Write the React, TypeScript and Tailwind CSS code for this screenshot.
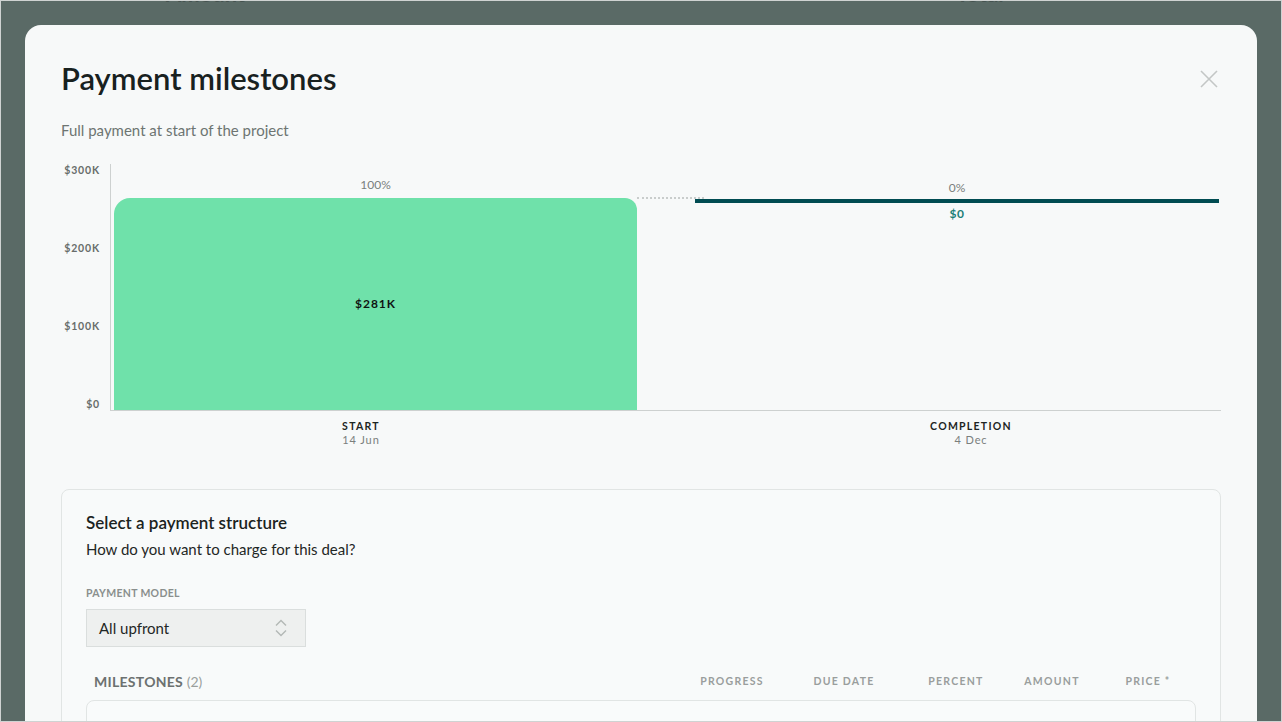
export default function App() {
  return (
    <div
      className="relative h-[722px] w-[1282px] overflow-hidden border border-[#cfd3d2] bg-[#5a6a66] px-[24px] pt-[24px]"
      style={{ fontFamily: "Lato, 'Noto Sans', sans-serif" }}
    >
      {/* page behind the overlay */}
      <div className="absolute left-[165px] top-[-19px] text-[22px] font-bold leading-[24px] text-[#45524f]">Amount</div>
      <div className="absolute left-[955px] top-[-19px] text-[22px] font-bold leading-[24px] text-[#45524f]">Total</div>

      <div className="h-[800px] w-[1232px] rounded-2xl bg-[#f7f9f9] px-[36px] pt-[35px]">
        {/* Header */}
        <div className="flex items-start justify-between">
          <h1 className="text-[31px] font-semibold leading-[36px] text-[#18211f]">Payment milestones</h1>
          <svg width="18" height="18" viewBox="0 0 18 18" className="mr-[3px] mt-[10px]">
            <path d="M1 1L17 17M17 1L1 17" stroke="#c3c7c6" strokeWidth="1.6" />
          </svg>
        </div>
        <p className="mt-[24px] text-[15px] leading-[20px] text-[#6d7572]">Full payment at start of the project</p>

        {/* Chart */}
        <div className="mt-[23px] flex">
          <div className="flex h-[248px] w-[49px] flex-col items-end justify-between pr-[10px] text-[10.5px] font-bold leading-[14px] tracking-[0.08em] text-[#686d6b]">
            <span>$300K</span>
            <span>$200K</span>
            <span>$100K</span>
            <span>$0</span>
          </div>
          <div className="relative mt-[1px] h-[247px] w-[1111px] border-b border-l border-[#cdd1d0]">
            <div className="absolute left-[3px] top-[13px] w-[523px] text-center text-[12px] leading-[16px] text-[#7a7f7d]">100%</div>
            <div className="absolute bottom-0 left-[3px] flex h-[212px] w-[523px] items-center justify-center rounded-tl-[16px] rounded-tr-[12px] bg-[#6fe1aa]">
              <span className="text-[12px] font-bold tracking-[0.08em] text-[#0f1412]">$281K</span>
            </div>
            <div className="absolute left-[526px] top-[33px] w-[67px] border-t-2 border-dotted border-[#c9cdcc]" />
            <div className="absolute left-[584px] top-[16px] w-[524px] text-center text-[12px] leading-[16px] text-[#7a7f7d]">0%</div>
            <div className="absolute left-[584px] top-[35px] h-[4px] w-[524px] bg-[#004c52]" />
            <div className="absolute left-[584px] top-[42px] w-[524px] text-center text-[12px] font-bold leading-[16px] tracking-[0.05em] text-[#1b8078]">$0</div>
          </div>
        </div>
        <div className="mt-[8px] flex">
          <div className="ml-[200px] w-[200px] text-center">
            <div className="text-[10.5px] font-bold leading-[14px] tracking-[0.12em] text-[#1d2523]">START</div>
            <div className="text-[11px] leading-[13px] tracking-[0.08em] text-[#7a7f7d]">14 Jun</div>
          </div>
          <div className="ml-[410px] w-[200px] text-center">
            <div className="text-[10.5px] font-bold leading-[14px] tracking-[0.12em] text-[#1d2523]">COMPLETION</div>
            <div className="text-[11px] leading-[13px] tracking-[0.08em] text-[#7a7f7d]">4 Dec</div>
          </div>
        </div>

        {/* Payment structure card */}
        <div className="mt-[43px] rounded-lg border border-[#e1e5e4] bg-[#f8fafa] px-[24px] pt-[21px]">
          <h2 className="text-[17px] font-semibold leading-[24px] text-[#1b2321]">Select a payment structure</h2>
          <p className="mt-[4px] text-[15px] leading-[20px] text-[#1f2725]">How do you want to charge for this deal?</p>
          <div className="mt-[27px] text-[10.5px] font-bold leading-[14px] tracking-[0.03em] text-[#8a8f8d]">PAYMENT MODEL</div>
          <div className="mt-[9px] flex h-[38px] w-[220px] items-center justify-between border border-[#dadedd] bg-[#eef0ef] pl-[12px] pr-[17px]">
            <span className="text-[15px] text-[#1f2725]">All upfront</span>
            <svg width="14" height="20" viewBox="0 0 14 20">
              <path d="M2 7.5L7 2.5L12 7.5M2 12.5L7 17.5L12 12.5" fill="none" stroke="#b3b8b6" strokeWidth="1.4" />
            </svg>
          </div>
          <div className="mt-[25px] flex items-center">
            <div className="flex-1 pl-[8px] text-[14px] leading-[20px] text-[#6c7170]">
              <span className="font-bold tracking-[0.02em]">MILESTONES</span>{" "}
              <span className="text-[#9a9f9d]">(2)</span>
            </div>
            <div className="flex text-[10.5px] font-bold tracking-[0.12em] text-[#9a9e9d]">
              <span className="w-[112px] text-center">PROGRESS</span>
              <span className="w-[112px] text-center">DUE DATE</span>
              <span className="ml-[8px] w-[96px] text-center">PERCENT</span>
              <span className="w-[96px] text-center">AMOUNT</span>
              <span className="w-[96px] text-center">PRICE *</span>
            </div>
          </div>
          <div className="mt-[8px] h-[60px] rounded-t-lg border border-[#e1e5e4] bg-[#f9fbfb]" />
        </div>
      </div>
    </div>
  );
}
